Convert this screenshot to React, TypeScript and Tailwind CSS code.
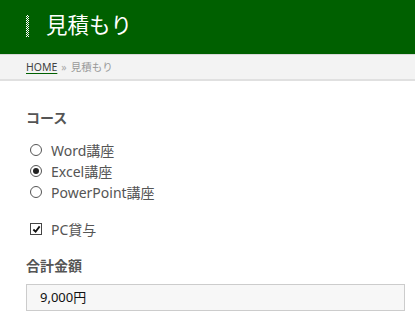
import { useState } from "react";

const courses = ["Word講座", "Excel講座", "PowerPoint講座"];

export default function App() {
  const [course, setCourse] = useState(1);
  const [pc, setPc] = useState(true);

  return (
    <div
      className="w-[415px] h-[324px] bg-white overflow-hidden text-[#555]"
      style={{ fontFamily: '"Noto Sans", "Noto Sans CJK JP", sans-serif' }}
    >
      {/* Header */}
      <header className="h-[54px] bg-[#006000] flex items-center pl-[26px]">
        <span
          className="w-[3px] h-[22px] mr-[17px] mt-[-2px]"
          style={{
            backgroundImage:
              "repeating-conic-gradient(#ffffff 0 25%, #006000 0 50%)",
            backgroundSize: "2px 2px",
          }}
        />
        <h1 className="text-white text-[21.5px] leading-none mt-[-4px]">見積もり</h1>
      </header>

      {/* Breadcrumb */}
      <nav className="h-[27px] bg-[#f3f3f3] border-t border-[#d8d8d8] border-b-2 border-b-[#e0e0e0] flex items-center pl-[26px] pt-[1px] text-[10.5px]">
        <a href="#" className="text-[#444] underline decoration-[#006000] underline-offset-2">
          HOME
        </a>
        <span className="text-[#aaa] mx-[4px]">»</span>
        <span className="text-[#999]">見積もり</span>
      </nav>

      {/* Form */}
      <div className="pl-[26px] pr-[10px] pt-[30px]">
        <h2 className="text-[14px] font-bold leading-none">コース</h2>
        <div className="mt-[15px] flex flex-col gap-[1px]">
          {courses.map((c, i) => (
            <label key={c} className="flex items-center h-[20px] text-[14px]">
              <span
                onClick={() => setCourse(i)}
                className="w-[12px] h-[12px] ml-[4px] mr-[9px] rounded-full border border-[#555] bg-white flex items-center justify-center"
              >
                {course === i && <span className="w-[6px] h-[6px] rounded-full bg-[#222]" />}
              </span>
              {c}
            </label>
          ))}
        </div>

        <label className="flex items-center h-[20px] mt-[17px] text-[14px]">
          <span
            onClick={() => setPc(!pc)}
            className="w-[12px] h-[12px] ml-[4px] mr-[9px] border border-[#444] bg-white flex items-center justify-center"
          >
            {pc && (
              <svg viewBox="0 0 10 10" className="w-[9px] h-[9px]">
                <path d="M1.5 5 L4 7.5 L8.5 1.5" fill="none" stroke="#111" strokeWidth="2" />
              </svg>
            )}
          </span>
          PC貸与
        </label>

        <h2 className="text-[14px] font-bold leading-none mt-[20px]">合計金額</h2>
        <div className="mt-[11px] w-[379px] h-[27px] bg-[#f7f7f7] border border-[#cccccc] flex items-center pl-[13px] text-[13px] text-[#111]">
          9,000円
        </div>
      </div>
    </div>
  );
}
